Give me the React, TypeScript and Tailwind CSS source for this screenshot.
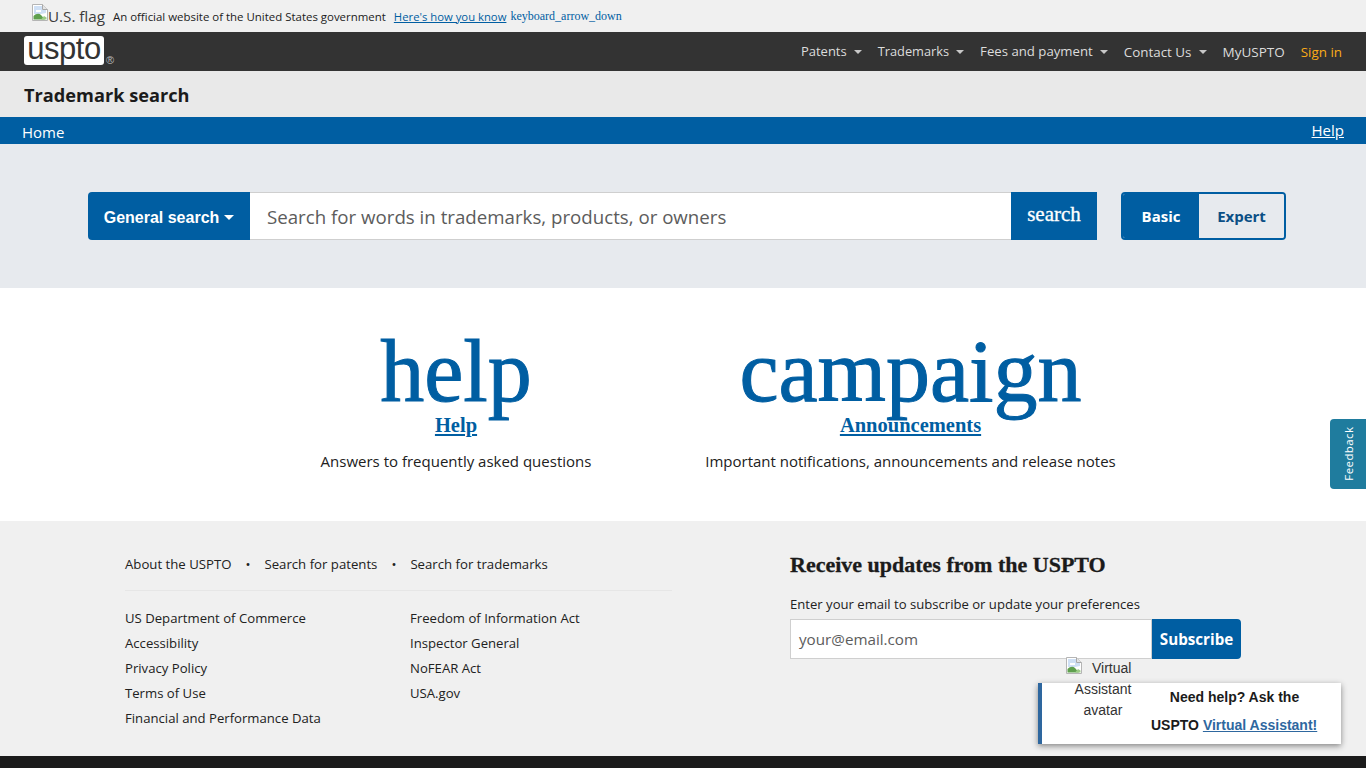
import React from "react";

const sans = "font-['Open_Sans','Noto_Sans',sans-serif]";
const serif = "font-['Liberation_Serif',serif]";

function BrokenImage() {
  return (
    <svg width="16" height="17" viewBox="0 0 16 17" className="shrink-0">
      <path d="M0.5 0.5H10.5L15.5 5.5V16.5H0.5Z" fill="#fff" stroke="#b5b5b5" />
      <path d="M10.5 0.5V5.5H15.5" fill="#e4e4e4" stroke="#a8a8a8" />
      <path d="M2 10V2H10V6L14 6V9L9 10Z" fill="#cfe0f5" />
      <path d="M4 6H9V8H4Z" fill="#ffffff" />
      <path d="M1.5 15.5V12C4 9.5 7 9 9 11L13 15.5Z" fill="#5fa04e" />
      <path d="M9 15.5L12 12L14.5 13.5V15.5Z" fill="#9ccc86" />
    </svg>
  );
}

function Caret({ color = "#c8c8c8" }: { color?: string }) {
  return <span className="ml-[7px] inline-block h-0 w-0 border-x-[4px] border-t-[4px] border-x-transparent" style={{ borderTopColor: color }} />;
}

function NavItem({ label, size }: { label: string; size: string }) {
  return (
    <a className={`flex items-center text-[#dcdcdc] ${size}`}>
      {label}
      <Caret />
    </a>
  );
}

function FooterLink({ children }: { children: React.ReactNode }) {
  return <a className="block h-[25px] text-[13.15px] leading-[25px] text-[#212121]">{children}</a>;
}

export default function App() {
  return (
    <div className={`relative flex h-screen flex-col overflow-hidden bg-white ${sans}`}>
      <div className="flex h-[32px] shrink-0 items-center bg-[#f0f0f0] pl-[32px]">
        <div className="flex items-center text-[15.2px] leading-none text-[#3a3a3a]">
          <span className="-mt-[7px]"><BrokenImage /></span>
          <span className="mt-[2px]">U.S. flag</span>
        </div>
        <span className="ml-[8px] mt-[2px] text-[11.45px] text-[#212121]">An official website of the United States government</span>
        <a className="ml-[8px] mt-[2px] text-[11.3px] text-[#005ea2] underline">Here's how you know</a>
        <span className={`ml-[4px] text-[12px] text-[#005ea2] ${serif}`}>keyboard_arrow_down</span>
      </div>

      <header className="flex h-[39px] shrink-0 items-center justify-between bg-[#333333] pl-[24px] pr-[24px]">
        <div className="flex items-end">
          <div className="-mt-[2px] flex h-[29px] w-[80px] items-center justify-center rounded-[3px] bg-white font-['Liberation_Sans',sans-serif] text-[31px] leading-none tracking-[-0.5px] text-[#333333]">
            <span className="-mt-[5px]">uspto</span>
          </div>
          <span className="ml-[2px] font-['Liberation_Sans',sans-serif] text-[11px] leading-[10px] text-[#bbbbbb]">®</span>
        </div>
        <nav className="flex items-center gap-[16px] pt-[1px]">
          <NavItem label="Patents" size="text-[13px]" />
          <NavItem label="Trademarks" size="text-[12.8px]" />
          <NavItem label="Fees and payment" size="text-[13.2px]" />
          <NavItem label="Contact Us" size="text-[13.4px]" />
          <a className="text-[13.5px] text-[#dcdcdc]">MyUSPTO</a>
          <a className="text-[13.4px] text-[#fbab18]">Sign in</a>
        </nav>
      </header>

      <div className="flex h-[46px] shrink-0 items-center bg-[#e9e9e9] pl-[24px]">
        <h1 className="mt-[4px] text-[18.2px] font-bold text-[#1b1b1b]">Trademark search</h1>
      </div>

      <div className="flex h-[27px] shrink-0 items-center justify-between bg-[#005ea2] pl-[22px] pr-[22px] text-[15px] text-white">
        <a className="mt-[3px]">Home</a>
        <a className="underline">Help</a>
      </div>

      <section className="flex h-[144px] shrink-0 items-center bg-[#e7eaee] pl-[88px]">
        <button className="flex h-[48px] w-[162px] items-center justify-center rounded-l-[4px] bg-[#005ea2] pt-[3px] font-['Liberation_Sans',sans-serif] text-[16px] font-bold text-white">
          General search
          <span className="ml-[5px] inline-block h-0 w-0 border-x-[5px] border-t-[5px] border-x-transparent border-t-white" />
        </button>
        <div className="flex h-[48px] w-[761px] items-center border-y border-[#cfcfcf] bg-white pl-[17px] pt-[2px] text-[18.7px] text-[#5c5c5c]">
          Search for words in trademarks, products, or owners
        </div>
        <button className={`h-[48px] w-[86px] bg-[#005ea2] pb-[3px] text-[21px] text-white [-webkit-text-stroke:0.3px_#ffffff] ${serif}`}>search</button>
        <div className="ml-[24px] flex h-[48px] w-[165px] overflow-hidden rounded-[4px] border-2 border-[#005ea2] text-[15px] font-bold">
          <div className="flex w-[76px] items-center justify-center bg-[#005ea2] text-white">Basic</div>
          <div className="flex flex-1 items-center justify-center bg-[#e7eaee] text-[#0b4f85]">Expert</div>
        </div>
      </section>

      <section className="flex h-[233px] shrink-0 bg-white pl-[320px]">
        <div className="flex w-[272px] flex-col items-center">
          <div className={`mt-[29px] h-[95px] text-[88px] leading-[110px] text-[#005ea2] [-webkit-text-stroke:1px_#005ea2] ${serif}`}>help</div>
          <a className={`mt-[1px] text-[20.5px] font-bold leading-[24px] text-[#005ea2] underline ${serif}`}>Help</a>
          <p className="mt-[12px] text-[15px] leading-[24px] text-[#212121]">Answers to frequently asked questions</p>
        </div>
        <div className="ml-[113px] flex w-[411px] flex-col items-center">
          <div className={`mt-[29px] h-[95px] text-[88px] leading-[110px] text-[#005ea2] [-webkit-text-stroke:1px_#005ea2] ${serif}`}>campaign</div>
          <a className={`mt-[1px] text-[20.5px] font-bold leading-[24px] text-[#005ea2] underline ${serif}`}>Announcements</a>
          <p className="mt-[12px] text-[15px] leading-[24px] text-[#212121]">Important notifications, announcements and release notes</p>
        </div>
      </section>

      <footer className="flex h-[235px] shrink-0 bg-[#f0f0f0] pl-[125px]">
        <div className="w-[547px]">
          <div className="mt-[33px] flex h-[20px] items-center text-[13.2px] leading-[20px] text-[#212121]">
            <a>About the USPTO</a>
            <span className="mx-[14px] text-[#212121]">•</span>
            <a>Search for patents</a>
            <span className="mx-[14px] text-[#212121]">•</span>
            <a>Search for trademarks</a>
          </div>
          <div className="mt-[16px] border-t border-[#e6e6e6]" />
          <div className="mt-[15px] flex">
            <div className="w-[285px]">
              <FooterLink>US Department of Commerce</FooterLink>
              <FooterLink>Accessibility</FooterLink>
              <FooterLink>Privacy Policy</FooterLink>
              <FooterLink>Terms of Use</FooterLink>
              <FooterLink>Financial and Performance Data</FooterLink>
            </div>
            <div>
              <FooterLink>Freedom of Information Act</FooterLink>
              <FooterLink>Inspector General</FooterLink>
              <FooterLink>NoFEAR Act</FooterLink>
              <FooterLink>USA.gov</FooterLink>
            </div>
          </div>
        </div>
        <div className="ml-[118px] w-[451px]">
          <h2 className={`mt-[30px] text-[22px] font-bold leading-[28px] text-[#1b1b1b] [-webkit-text-stroke:0.3px_#1b1b1b] ${serif}`}>Receive updates from the USPTO</h2>
          <p className="mt-[15px] text-[13.1px] leading-[20px] text-[#212121]">Enter your email to subscribe or update your preferences</p>
          <div className="mt-[5px] flex h-[40px]">
            <div className="flex w-[362px] items-center border border-[#cfcfcf] bg-white pl-[8px] text-[15.2px] text-[#5c5c5c]">your@email.com</div>
            <button className="flex w-[89px] items-center justify-center rounded-r-[4px] bg-[#005ea2] text-[15.2px] font-bold text-white">Subscribe</button>
          </div>
        </div>
      </footer>

      <div className="h-[12px] shrink-0 bg-[#1b1b1b]" />

      <a className="absolute right-0 top-[419px] flex h-[70px] w-[36px] items-center justify-center rounded-l-[4px] bg-[#1f7c9e] pl-[3px] text-white">
        <span className="-rotate-90 whitespace-nowrap text-[11.5px] tracking-[0.4px]">Feedback</span>
      </a>

      <div className="absolute left-[1038px] top-[683px] flex h-[61px] w-[303px] border-l-[4px] border-[#2e679f] bg-white font-['Liberation_Sans',sans-serif] text-[14px] shadow-[0_2px_6px_rgba(0,0,0,0.45)]">
        <div className="relative w-[122px]">
          <div className="absolute -top-[26px] left-[24px] w-[74px] text-center leading-[21px] text-[#333333]">
            <div className="flex items-start"><BrokenImage /><span className="ml-[10px] mt-[1px]">Virtual</span></div>
            Assistant<br />avatar
          </div>
        </div>
        <div className="flex-1 text-center font-bold leading-[28px] text-[#1b1b1b]">
          <div className="pr-[36px]">Need help? Ask the</div>
          <div className="-ml-[13px] whitespace-nowrap text-left">USPTO <a className="text-[#2e679f] underline">Virtual Assistant!</a></div>
        </div>
      </div>
    </div>
  );
}
